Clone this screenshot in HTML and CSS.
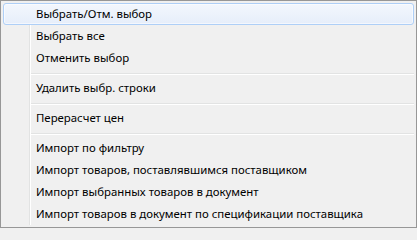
FILE: index.html
```html
<!DOCTYPE html>
<html lang="ru">
<head>
<meta charset="utf-8">
<title>Menu</title>
<link rel="stylesheet" href="styles.css">
</head>
<body>
<div class="menu">
  <ul class="list">
    <li class="item active">Выбрать/Отм. выбор</li>
    <li class="item">Выбрать все</li>
    <li class="item">Отменить выбор</li>
    <li class="sep"></li>
    <li class="item">Удалить выбр. строки</li>
    <li class="sep"></li>
    <li class="item">Перерасчет цен</li>
    <li class="sep"></li>
    <li class="item">Импорт по фильтру</li>
    <li class="item">Импорт товаров, поставлявшимся поставщиком</li>
    <li class="item">Импорт выбранных товаров в документ</li>
    <li class="item">Импорт товаров в документ по спецификации поставщика</li>
  </ul>
</div>
</body>
</html>
```

FILE: styles.css
```css
html, body {
  margin: 0;
  padding: 0;
  background: #f0f0f0;
}
.menu {
  width: 417px;
  height: 228px;
  box-sizing: border-box;
  border: 1px solid #979797;
  background: #f0f0f0;
  padding: 2px;
  font-family: "Noto Sans", "Open Sans", sans-serif;
  font-size: 11.4px;
  color: #000;
}
.list {
  list-style: none;
  margin: 0;
  padding: 0;
  display: flex;
  flex-direction: column;
  height: 100%;
  background: linear-gradient(to right, transparent 26px, #e2e3e3 26px, #e2e3e3 27px, #ffffff 27px, #ffffff 28px, transparent 28px);
}
.item {
  height: 22px;
  box-sizing: border-box;
  padding-left: 32px;
  padding-bottom: 1px;
  display: flex;
  align-items: center;
  border: 1px solid transparent;
  border-radius: 3px;
  white-space: nowrap;
}
.item.active {
  border-color: #aecff7;
  background: linear-gradient(to bottom, #f3f7fd, #e6eefa);
  box-shadow: inset 0 0 0 1px rgba(255, 255, 255, 0.55);
}
.sep {
  height: 8px;
  box-sizing: border-box;
  margin-left: 28px;
  padding-top: 4px;
}
.sep::before {
  content: "";
  display: block;
  height: 1px;
  background: #e2e3e3;
  border-bottom: 1px solid #ffffff;
}
```
